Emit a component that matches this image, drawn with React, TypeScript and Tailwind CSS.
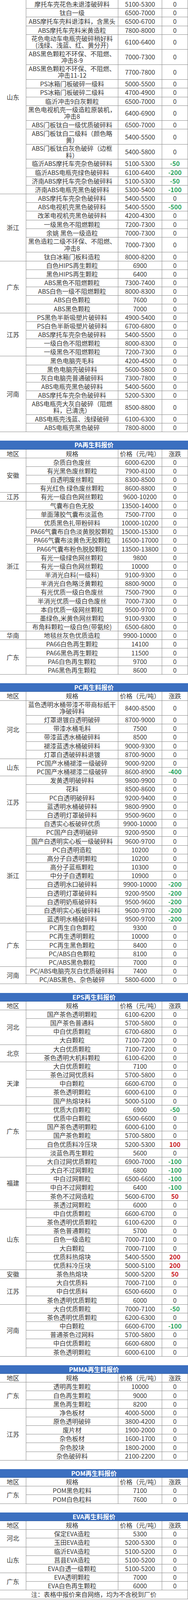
import React, { useMemo } from "react";

type Row = [string, string, number?];
type Group = { region: string; rows: Row[] };
type Section = { title?: string; groups: Group[] };

const sections: Section[] = [
    {
        groups: [
            {
                region: "山东",
                rows: [
                    ["摩托车壳花色未退漆破碎料", "5100-5300"],
                    ["钛白一级", "6500-7000"],
                    ["ABS摩托车壳料退漆料，含黑头", "6500-6700"],
                    ["ABS摩托车壳料米黄造粒", "7800-8000"],
                    ["花色电动车电瓶壳破碎稍好料\n(浅绿、浅蓝、红、黄分开)", "6100-6400"],
                    ["ABS黑色颗粒不环保、不阻燃、\n冲击8-9", "7000-7300"],
                    ["ABS黑色颗粒不环保、不阻燃、\n冲击11-12", "7700-7800"],
                    ["PS冰箱门板破碎一级料", "5000-5500"],
                    ["PS冰箱门板破碎二级料", "4700-4900"],
                    ["临沂冲击9白灰颗粒", "6500-7000"],
                    ["黑色电视机壳一级造粒原装机，\n冲击8", "6400-6900"],
                    ["ABS门板钛白一级优质破碎料", "6500-7000"],
                    ["ABS门板钛白二级料（颜色略\n黄）", "5400-5500"],
                    ["ABS门板钛白灰色破碎（边框\n料）", "5400-5800"],
                    ["临沂ABS摩托车壳杂色破碎料", "5100-5300", -50],
                    ["临沂ABS电瓶壳绿色破碎料", "6100-6400", -200],
                    ["济南ABS摩托车壳杂色破碎料", "5100-5300", -50],
                    ["济南ABS电瓶壳黑色破碎料", "5300-5400", -100],
                ],
            },
            {
                region: "浙江",
                rows: [
                    ["ABS摩托车壳杂色破碎料", "5400-5500"],
                    ["ABS电视机壳黑色破碎料", "5400-5500", -500],
                    ["改苯电视机壳黑色破碎料", "4200-4300"],
                    ["一级黑色不阻燃颗粒", "7200-7300"],
                    ["余姚 黑色一级造粒", "7000-7300"],
                    ["黑色造粒二级不环保、不阻燃、\n冲击8", "7000-7300"],
                    ["钛白冰箱门板料造粒", "8000-8200"],
                ],
            },
            {
                region: "广东",
                rows: [
                    ["白色HIPS再生颗粒", "6900"],
                    ["黑色HIPS再生颗粒", "6400"],
                    ["ABS黑色不阻燃颗粒", "7300-7400"],
                    ["ABS白色一级不阻燃颗粒", "8000-8300"],
                    ["ABS白色颗粒", "7600"],
                    ["ABS黑色颗粒", "7000"],
                ],
            },
            {
                region: "江苏",
                rows: [
                    ["PS黑色半新吸塑片破碎料", "4900-5400"],
                    ["PS白色半新吸塑片破碎料", "6700-6800"],
                    ["ABS摩托车壳杂色破碎料", "5400-5500"],
                    ["一级白色不阻燃颗粒", "8000-8300"],
                    ["一级黑色不阻燃颗粒", "7200-7300"],
                ],
            },
            {
                region: "河南",
                rows: [
                    ["黑色电脑壳毛料", "4200-4500"],
                    ["黑色电脑壳破碎料", "5600-5800"],
                    ["灰白电脑壳普通破碎料", "7300-7800"],
                    ["ABS电瓶壳黑色破碎料", "5400-5600"],
                    ["ABS摩托车壳杂色破碎料", "5200-5300"],
                    ["ABS电瓶壳大灰白破碎（阻燃\n料，已清洗）", "8500-8800"],
                    ["ABS电瓶壳浅蓝、浅绿破碎", "6100-6300"],
                    ["ABS电瓶壳黑色破碎", "7800-8000"],
                ],
            },
        ],
    },
    {
        title: "PA再生料报价",
        groups: [
            {
                region: "安徽",
                rows: [
                    ["杂质白色废丝", "6000-6200"],
                    ["有光黑色废丝颗粒", "7900-8100"],
                    ["白透明废丝颗粒", "8300-8500"],
                    ["有光红色 绿色废丝颗粒", "8600-8800"],
                ],
            },
            { region: "江苏", rows: [["有光一级白色网丝颗粒", "9600-10200"]] },
            {
                region: "浙江",
                rows: [
                    ["气囊布白色无胶", "13500-14000"],
                    ["单面薄胶气囊布淡蓝色", "7500-7700"],
                    ["优质黑色扎带粉碎料", "10000-10200"],
                    ["PA66气囊布白色淡黄脱胶颗粒", "15000-15300"],
                    ["PA66气囊布淡黄色无胶颗粒", "16500-17000"],
                    ["PA66气囊布粉色脱胶颗粒", "13500-13800"],
                    ["有光一级绿色网丝颗粒", "9800"],
                    ["有光一级白色网丝颗粒", "10000"],
                    ["半消光白料(一级料)", "9100-9300"],
                    ["半消光白色略泛黄颗粒", "8800-9000"],
                    ["有光优质一级白色废丝", "7500-7900"],
                    ["半消光优质一级白色废丝", "7000-7300"],
                    ["本白优质一级网丝颗粒", "9500-9700"],
                    ["墨绿色,米黄色网丝颗粒", "9100-9300"],
                    ["布角料颗粒一级白色(带氨纶)", "6500-6800"],
                ],
            },
            { region: "华南", rows: [["地毯丝灰色优质造粒", "9900-10000"]] },
            {
                region: "广东",
                rows: [
                    ["PA66白色再生颗粒", "14100"],
                    ["PA66黑色再生颗粒", "11500"],
                    ["PA6白色再生颗粒", "9700"],
                    ["PA6黑色再生颗粒", "8600"],
                ],
            },
        ],
    },
    {
        title: "PC再生料报价",
        groups: [
            {
                region: "河北",
                rows: [
                    ["蓝色透明水桶带漆不带商标纸干\n净破碎料", "8400-8500"],
                    ["灯罩退镀白透明破碎", "8700-9000"],
                    ["带漆水桶毛料", "7500"],
                    ["带漆蓝透水桶破碎料", "8500"],
                    ["褪漆蓝透水桶破碎料", "9000-9300"],
                    ["灯罩白透破碎料退镀", "8700-9000"],
                ],
            },
            {
                region: "山东",
                rows: [
                    ["PC国产水桶褪漆一级破碎", "9000-9200"],
                    ["PC国产水桶褪漆二级破碎", "8600-8900", -400],
                ],
            },
            {
                region: "江苏",
                rows: [
                    ["发黄透明破碎料", "9800-9900"],
                    ["花料", "8500-8600"],
                    ["PC白透明破碎料", "9200-9400"],
                    ["蓝透明水桶破碎料", "9800-9900"],
                    ["白透明灯罩破碎料", "9500-9600"],
                    ["白透实心板破碎优质", "9900-10000"],
                ],
            },
            {
                region: "浙江",
                rows: [
                    ["PC国产白透明破碎", "9200-9500"],
                    ["国产白透明实心板一级破碎料", "9600-9700"],
                    ["PC白透明造粒", "10200"],
                    ["高分子白透明颗粒", "10200"],
                    ["高分子蓝瓶颗粒", "10300"],
                    ["中分子白透颗粒", "10900"],
                    ["白透明水口破碎料", "9900-10000", -200],
                    ["白透明灯罩破碎料", "9200-9500", -200],
                    ["白透明奶瓶破碎料", "9500-9600", -200],
                    ["白透明实心板破碎料", "9600-9700", -200],
                    ["蓝透明水桶破碎料", "9500-9700", -200],
                ],
            },
            {
                region: "广东",
                rows: [
                    ["PC再生白色颗粒", "9300"],
                    ["PC再生透明颗粒", "10000"],
                    ["PC再生黑色颗粒", "8400"],
                    ["PC/ABS白色颗粒", "8100"],
                    ["PC/ABS黑色颗粒", "7000"],
                ],
            },
            {
                region: "河南",
                rows: [
                    ["PC/ABS电脑壳灰白优质破碎料", "7400"],
                    ["PC/ABS黑色、杂色破碎", "5800-6000"],
                ],
            },
        ],
    },
    {
        title: "EPS再生料报价",
        groups: [
            {
                region: "河北",
                rows: [
                    ["国产茶色透明颗粒", "6100-6200"],
                    ["国产茶色普通料", "5700-5800"],
                    ["中白优质颗粒", "6700-6800"],
                    ["大白颗粒", "7100-7200"],
                ],
            },
            {
                region: "北京",
                rows: [
                    ["大白优质颗粒", "7100-7200"],
                    ["茶色透明大机料颗粒", "6100-6200"],
                ],
            },
            {
                region: "天津",
                rows: [
                    ["大白优质颗粒", "7100"],
                    ["茶色过网优质料", "5700-5800"],
                    ["中白颗粒", "6600-6700"],
                    ["茶色透明颗粒", "6000-6100"],
                    ["国产热熔块料", "5000-5100"],
                ],
            },
            {
                region: "广东",
                rows: [
                    ["优质大白颗粒", "6900", -50],
                    ["优质中白颗粒", "6500-6600"],
                    ["国产茶色透明颗粒", "6000-6100"],
                    ["国产茶色颗粒", "5700-5800"],
                    ["白色优质料冷压块", "5200-5300", 100],
                    ["淡蓝色再生颗粒", "5600"],
                ],
            },
            {
                region: "福建",
                rows: [
                    ["大白过网优质颗粒", "6900-7000", -100],
                    ["大白不过网颗粒", "6800", -100],
                    ["中白过网颗粒", "6500-6600", -100],
                    ["中白不过网颗粒", "6400", -100],
                    ["茶色不过网造粒", "5600-6700", 50],
                    ["茶透过网颗粒", "6000"],
                ],
            },
            {
                region: "山东",
                rows: [
                    ["中白优质颗粒", "6600-6700"],
                    ["茶色透明优质颗粒", "6100-6200"],
                    ["茶色普通颗粒", "5700"],
                    ["白色一级造粒", "7000-7100"],
                    ["大白颗粒", "7000-7100"],
                    ["优质料热熔块", "5400-5500", 200],
                    ["优质料冷压块", "5000-5100", 200],
                ],
            },
            { region: "安徽", rows: [["茶色热熔块", "5000-5200", 50]] },
            {
                region: "江苏",
                rows: [
                    ["大白优质料", "7000-7100"],
                    ["中白优质料", "6500-6600"],
                    ["茶色透明优质颗粒", "6000"],
                ],
            },
            {
                region: "河南",
                rows: [
                    ["大白优质颗粒", "7000-7100", -50],
                    ["茶色透明优质颗粒", "6200-6300"],
                    ["中白颗粒", "6600-6700", -100],
                    ["普通茶色过网料", "5700-5800"],
                    ["中白优质颗粒", "6600-6800"],
                    ["茶色透明颗粒", "6000-6100"],
                ],
            },
        ],
    },
    {
        title: "PMMA再生料报价",
        groups: [
            {
                region: "广东",
                rows: [
                    ["透明再生颗粒", "10000"],
                    ["白色再生颗粒", "9000"],
                    ["黑色再生颗粒", "8200"],
                ],
            },
            {
                region: "江苏",
                rows: [
                    ["净色板材", "4000-5000"],
                    ["原色透明破碎", "3800-4200"],
                    ["废片材", "1900-2000"],
                    ["杂色板材", "1600-1700"],
                    ["杂色胶块", "1800-2000"],
                    ["杂色破碎料", "2100-2200"],
                ],
            },
        ],
    },
    {
        title: "POM再生料报价",
        groups: [
            {
                region: "广东",
                rows: [
                    ["POM黑色粒料", "7100"],
                    ["POM白色粒料", "7600"],
                ],
            },
        ],
    },
    {
        title: "EVA再生料报价",
        groups: [
            {
                region: "河北",
                rows: [
                    ["保定EVA造粒", "5300"],
                    ["玉田EVA造粒", "5200-5300"],
                ],
            },
            {
                region: "山东",
                rows: [
                    ["临沂EVA造粒", "5100-5200"],
                    ["莒县EVA造粒", "5100-5200"],
                    ["EVA白透一级颗粒", "5100-5200"],
                ],
            },
            {
                region: "广东",
                rows: [
                    ["EVA透明颗粒", "7000"],
                    ["EVA白色再生颗粒", "6000"],
                ],
            },
        ],
    },
];

const PAGE_H = 4468;

function useScale() {
    return useMemo(() => {
        const h = typeof window !== "undefined" ? window.innerHeight : PAGE_H;
        if (!h || h < 3500) return 1;
        return Math.min(1, h / PAGE_H);
    }, []);
}

function Change({ value }: { value?: number }) {
    if (!value) return <span>0</span>;
    if (value < 0) return <span className="font-bold text-[#27a25c]">{value}</span>;
    return <span className="font-bold text-[#c8161d]">{value}</span>;
}

function TableHead({ rowH }: { rowH: number }) {
    return (
        <div className="grid grid-cols-[67px_235px_112px_66px] border-b border-[#8a8a8a]" style={{ height: rowH }}>
            <div className="flex items-center justify-center border-r border-[#8a8a8a]">地区</div>
            <div className="flex items-center justify-center border-r border-[#8a8a8a]">规格</div>
            <div className="flex items-center justify-center border-r border-[#8a8a8a] whitespace-nowrap">价格（元/吨）</div>
            <div className="flex items-center justify-center border-r border-[#8a8a8a]">涨跌</div>
        </div>
    );
}

function GroupBlock({ group, k }: { group: Group; k: number }) {
    return (
        <div className="flex">
            <div className="w-[67px] shrink-0 flex items-center justify-center border-r border-b border-[#8a8a8a]">
                {group.region}
            </div>
            <div className="flex-1 flex flex-col">
                {group.rows.map((row, i) => {
                    const two = row[0].includes("\n");
                    return (
                        <div
                            key={i}
                            className="grid grid-cols-[235px_112px_66px] border-b border-[#8a8a8a]"
                            style={{ height: (two ? 42 : 24.2) * k }}
                        >
                            <div
                                className="flex items-center justify-center text-center whitespace-pre-line border-r border-[#8a8a8a] px-0.5"
                                style={two ? { lineHeight: `${19 * k}px` } : undefined}
                            >
                                {row[0]}
                            </div>
                            <div className="flex items-center justify-center border-r border-[#8a8a8a]">{row[1]}</div>
                            <div className="flex items-center justify-center border-r border-[#8a8a8a]">
                                <Change value={row[2]} />
                            </div>
                        </div>
                    );
                })}
            </div>
        </div>
    );
}

export default function App() {
    const k = useScale();
    const rowH = 24.2 * k;

    return (
        <div className="w-[480px] bg-white text-[#383838] text-[16px] leading-[19px] font-['Noto_Sans_CJK_SC',sans-serif]">
            {sections.map((section, si) => (
                <div key={si}>
                    {si > 0 && <div style={{ height: rowH }} />}
                    {section.title && (
                        <>
                            <div
                                className="flex items-center justify-center bg-[#3b6fc0] border-b border-[#2b5797] text-white font-bold"
                                style={{ height: rowH }}
                            >
                                {section.title}
                            </div>
                            <TableHead rowH={rowH} />
                        </>
                    )}
                    {section.groups.map((g, gi) => (
                        <GroupBlock key={gi} group={g} k={k} />
                    ))}
                </div>
            ))}
            <div className="flex items-center justify-center border-r border-b border-[#8a8a8a]" style={{ height: rowH }}>
                注：表格中报价来自网络，均为不含税到厂价
            </div>
        </div>
    );
}
